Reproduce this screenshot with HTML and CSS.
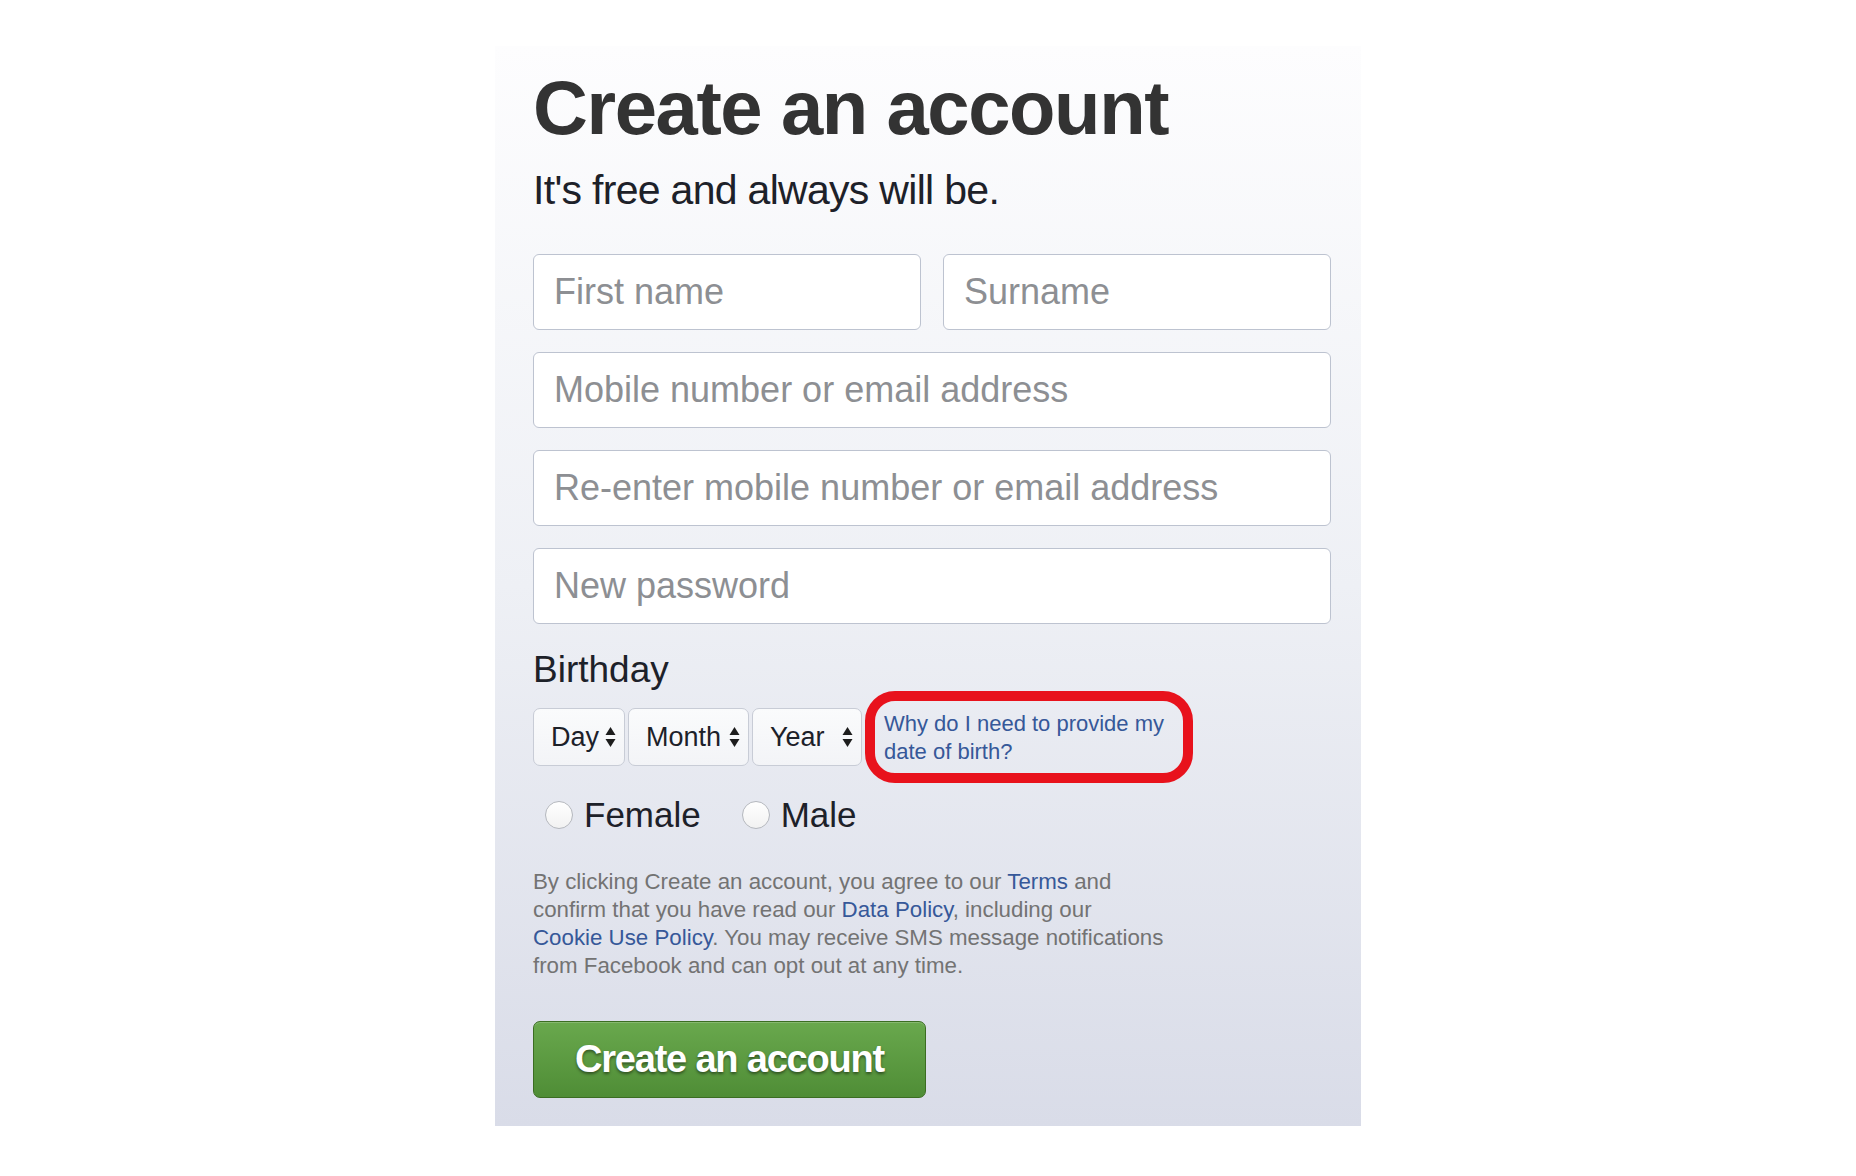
FILE: index.html
```html
<!DOCTYPE html>
<html lang="en">
<head>
    <meta charset="UTF-8">
    <title>Create an account</title>
    <link rel="stylesheet" href="styles.css">
</head>
<body>
    <div class="signup">
        <h1>Create an account</h1>
        <p class="tagline">It's free and always will be.</p>

        <!-- Name fields -->
        <div class="row">
            <input type="text" class="field" placeholder="First name">
            <input type="text" class="field" placeholder="Surname">
        </div>
        <input type="text" class="field" placeholder="Mobile number or email address">
        <input type="text" class="field" placeholder="Re-enter mobile number or email address">
        <input type="password" class="field" placeholder="New password">

        <!-- Birthday -->
        <div class="birthday-label">Birthday</div>
        <div class="birthday">
            <div class="picker picker-day"><span>Day</span>
                <svg class="arrows" width="11" height="22" viewBox="0 0 11 22"><path d="M5.5 1 L10.5 9 H0.5 Z M5.5 21 L10.5 13 H0.5 Z" fill="#1d1d1d"/></svg>
            </div>
            <div class="picker picker-month"><span>Month</span>
                <svg class="arrows" width="11" height="22" viewBox="0 0 11 22"><path d="M5.5 1 L10.5 9 H0.5 Z M5.5 21 L10.5 13 H0.5 Z" fill="#1d1d1d"/></svg>
            </div>
            <div class="picker picker-year"><span>Year</span>
                <svg class="arrows" width="11" height="22" viewBox="0 0 11 22"><path d="M5.5 1 L10.5 9 H0.5 Z M5.5 21 L10.5 13 H0.5 Z" fill="#1d1d1d"/></svg>
            </div>
            <a href="#" class="why">Why do I need to provide my date of birth?</a>
        </div>

        <!-- Gender -->
        <div class="gender">
            <label class="radio"><span class="dot"></span><span>Female</span></label>
            <label class="radio"><span class="dot"></span><span>Male</span></label>
        </div>

        <p class="terms">By clicking Create an account, you agree to our <a href="#">Terms</a> and<br>
            confirm that you have read our <a href="#">Data Policy</a>, including our<br>
            <a href="#">Cookie Use Policy</a>. You may receive SMS message notifications<br>
            from Facebook and can opt out at any time.</p>

        <button class="submit">Create an account</button>
    </div>
</body>
</html>
```

FILE: styles.css
```css
body {
    margin: 0;
    background-color: #fff;
    font-family: "Liberation Sans", Arial, sans-serif;
}

.signup {
    width: 866px;
    box-sizing: border-box;
    margin: 46px auto 0;
    padding: 18px 30px 28px 38px;
    background: linear-gradient(#fdfdfe, #eef0f5 50%, #d9dce8);
}

h1 {
    margin: 0;
    font-size: 76px;
    line-height: 88px;
    letter-spacing: -1.4px;
    color: #333;
}

.tagline {
    margin: 14px 0 40px;
    font-size: 41px;
    line-height: 48px;
    letter-spacing: -0.7px;
    color: #1d2129;
}

.row {
    display: flex;
    gap: 22px;
}

.row .field {
    flex: 1;
    min-width: 0;
}

.field {
    display: block;
    width: 100%;
    height: 76px;
    box-sizing: border-box;
    margin-bottom: 22px;
    padding: 0 20px;
    border: 1px solid #bdc3d0;
    border-radius: 6px;
    background-color: #fff;
    font-family: inherit;
    font-size: 36px;
    color: #1d2129;
}

.field::placeholder {
    color: #8d8f93;
}

.birthday-label {
    padding-top: 3px;
    font-size: 37px;
    line-height: 42px;
    color: #1d2129;
}

.birthday {
    display: flex;
    align-items: center;
    gap: 3px;
}

.picker {
    display: flex;
    align-items: center;
    justify-content: space-between;
    height: 58px;
    box-sizing: border-box;
    padding: 0 8px 0 17px;
    border: 1px solid #c8ccd6;
    border-radius: 7px;
    background: linear-gradient(#fafbfc, #f3f4f7);
    font-size: 27px;
    color: #1d2129;
}

.picker-day { width: 92px; }
.picker-month { width: 121px; }
.picker-year { width: 110px; }

.why {
    display: block;
    width: 328px;
    height: 92px;
    box-sizing: border-box;
    padding: 9px 8px 0 9px;
    border: 10px solid #e8121c;
    border-radius: 30px;
    font-size: 22px;
    line-height: 28px;
    color: #365899;
    text-decoration: none;
}

.gender {
    display: flex;
    align-items: center;
    height: 44px;
    margin-top: 10px;
    padding-left: 12px;
}

.radio {
    display: flex;
    align-items: center;
    gap: 11px;
    margin-right: 41px;
    font-size: 35px;
    color: #1d2129;
}

.dot {
    width: 28px;
    height: 28px;
    box-sizing: border-box;
    border: 1px solid #b5b8be;
    border-radius: 50%;
    background: linear-gradient(#fff, #f2f2f2);
}

.terms {
    margin: 31px 0 41px;
    font-size: 22.3px;
    line-height: 28px;
    color: #737373;
}

.terms a {
    color: #365899;
    text-decoration: none;
}

.submit {
    display: block;
    width: 393px;
    height: 77px;
    border: 1px solid #3b6d22;
    border-radius: 7px;
    background: linear-gradient(#69a84d, #4f8d36);
    font-family: inherit;
    font-size: 38px;
    font-weight: bold;
    letter-spacing: -1.2px;
    color: #fff;
    text-shadow: 0 2px 3px rgba(0, 0, 0, 0.45);
    box-shadow: inset 0 1px 0 rgba(255, 255, 255, 0.2);
    cursor: pointer;
}
```
